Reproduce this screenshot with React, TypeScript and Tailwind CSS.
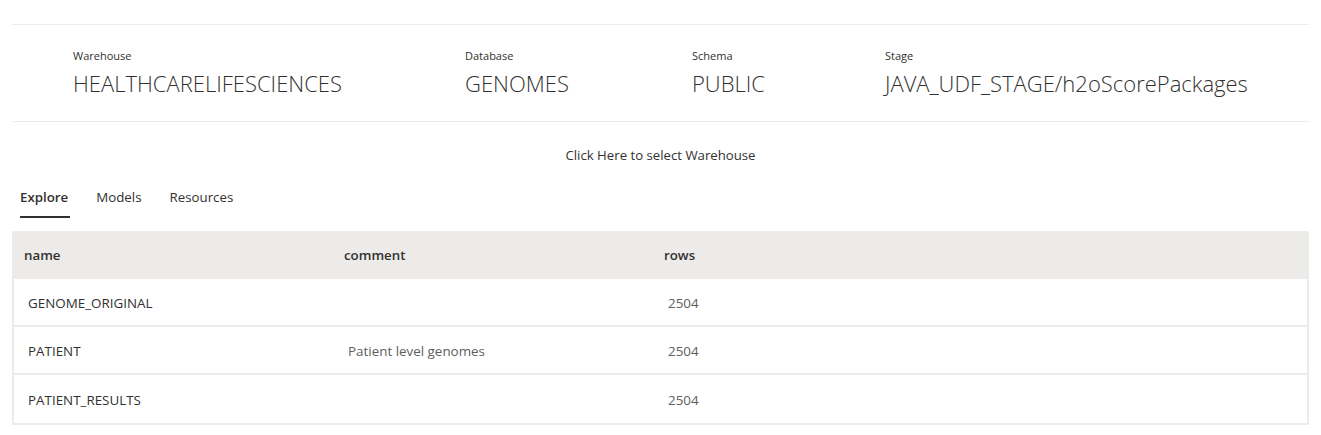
import React from "react";

const info = [
  { label: "Warehouse", value: "HEALTHCARELIFESCIENCES", width: "w-[392px]" },
  { label: "Database", value: "GENOMES", width: "w-[227px]" },
  { label: "Schema", value: "PUBLIC", width: "w-[193px]" },
  { label: "Stage", value: "JAVA_UDF_STAGE/h2oScorePackages", width: "flex-1" },
];

const tabs = ["Explore", "Models", "Resources"];

const rows = [
  { name: "GENOME_ORIGINAL", comment: "", rows: "2504" },
  { name: "PATIENT", comment: "Patient level genomes", rows: "2504" },
  { name: "PATIENT_RESULTS", comment: "", rows: "2504" },
];

export default function App() {
  return (
    <div
      className="min-h-screen bg-white px-3 pt-6 text-[#323130]"
      style={{ fontFamily: '"Segoe UI", "Open Sans", sans-serif' }}
    >
      {/* Context bar */}
      <div className="flex border-y border-[#edebe9] pl-[61px] pt-[23px] pb-[24px]">
        {info.map((item) => (
          <div key={item.label} className={item.width}>
            <div className="text-[11px] leading-4">{item.label}</div>
            <div className="mt-[5px] text-[22px] font-light leading-7">{item.value}</div>
          </div>
        ))}
      </div>

      <div className="flex justify-center pt-[23px]">
        <button className="text-[13.2px] leading-5">Click Here to select Warehouse</button>
      </div>

      {/* Tabs */}
      <div className="mt-[11px] flex">
        {tabs.map((tab, i) => (
          <div
            key={tab}
            className="relative mr-3 flex h-[42px] items-center px-2 text-[13.3px] leading-5"
          >
            <span className={i === 0 ? "font-semibold" : ""}>{tab}</span>
            {i === 0 && (
              <span className="absolute bottom-0 left-2 right-[6px] h-[2px] bg-[#323130]" />
            )}
          </div>
        ))}
      </div>

      {/* Table */}
      <div className="mt-[13px]">
        <div className="grid h-[48px] grid-cols-[320px_320px_1fr] items-center rounded-t-[2px] bg-[#edebe9] pl-3 pt-[2px] text-[13.3px] font-semibold">
          <div>name</div>
          <div>comment</div>
          <div>rows</div>
        </div>
        <div className="border-x-2 border-b-2 border-[#edebe9]">
          {rows.map((r, i) => (
            <div
              key={r.name}
              className={
                "grid h-[48px] grid-cols-[320px_320px_1fr] items-center pl-[14px] pt-[3px] text-[13.4px] " +
                (i < rows.length - 1 ? "border-b-2 border-[#edebe9]" : "")
              }
            >
              <div className="text-[#323130]">{r.name}</div>
              <div className="text-[#605e5c]">{r.comment}</div>
              <div className="text-[#605e5c]">{r.rows}</div>
            </div>
          ))}
        </div>
      </div>
    </div>
  );
}
